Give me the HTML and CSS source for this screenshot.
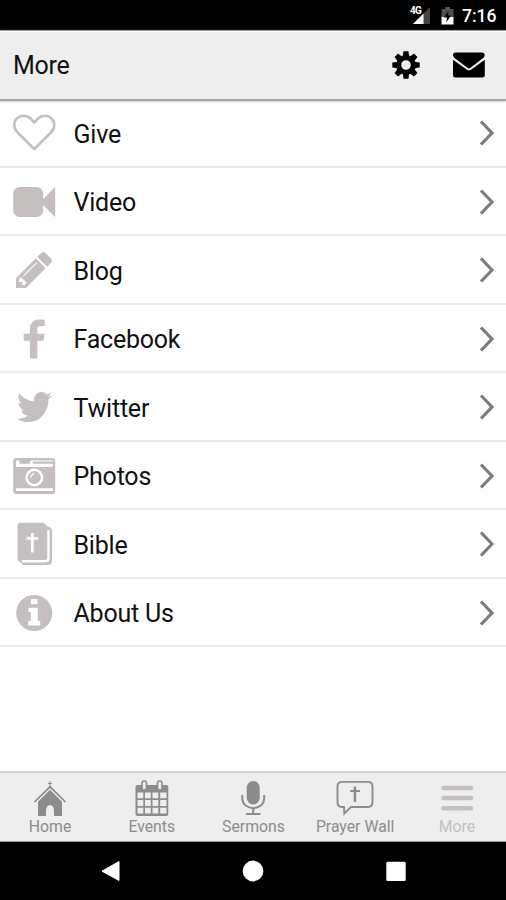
FILE: index.html
```
<!DOCTYPE html>
<html lang="en">
<head>
<meta charset="utf-8">
<title>More</title>
<link rel="stylesheet" href="styles.css">
</head>
<body>
<div class="screen">
  <div class="status">
    <svg class="signal" width="24" height="20" viewBox="0 0 24 20"><path d="M5 18L22 1V18z" fill="#444"/><path d="M5 18L15.500 7.500V18z" fill="#fff"/></svg>
    <span class="net">4G</span>
    <svg class="battery" width="13" height="20" viewBox="0 0 13 20"><path d="M4 1h5v2h3.500v8H.5V3H4z" fill="#505050"/><path d="M.5 11h12v7.500H.5z" fill="#fff"/><path d="M7.500 5L3 11.500h3L5.200 16.500 10 9.500H7z" fill="#000"/></svg>
    <span class="clock">7:16</span>
  </div>
  <header class="header">
    <h1 class="title">More</h1>
    <svg class="gear" width="30" height="30" viewBox="-15 -15 30 30"><circle r="7.400" fill="none" stroke="#000" stroke-width="5.200"/><g fill="#000"><path id="tooth" d="M-3.100-9L-2.500-13.700H2.500L3.100-9z"/><use href="#tooth" transform="rotate(45)"/><use href="#tooth" transform="rotate(90)"/><use href="#tooth" transform="rotate(135)"/><use href="#tooth" transform="rotate(180)"/><use href="#tooth" transform="rotate(225)"/><use href="#tooth" transform="rotate(270)"/><use href="#tooth" transform="rotate(315)"/></g></svg>
    <svg class="mail" width="34" height="28" viewBox="0 0 34 28"><path d="M3.500 1.500h27q2.200 0 2.200 2.500c0 1.500-1 2.700-2.500 3.800L18.500 16.700q-1.500 1-3 0L3.500 7.800C2 6.700 1 5.500 1 4q0-2.500 2.500-2.500z"/><path d="M1 8.800L15 18.800q2 1.300 4 0L32.800 8.800V24q0 2.500-2.500 2.500H3.500Q1 26.500 1 24z"/></svg>
  </header>
  <main class="list">
    <a class="row"><svg class="icon" viewBox="0 0 44 44"><path class="line" d="M22.200 38L5.500 21.500C1 16.500 1.500 10.500 5 7.300C9 3.600 15 4.200 18.500 7.500L22.200 11.500L26 7.500C30 4 35.500 3.800 39.300 7.300C43.300 11 43.200 17 39 21.500z"/></svg><span class="label">Give</span><svg class="chevron" viewBox="0 0 16 28"><path d="M2 2.500L13 14L2 25.500"/></svg></a>
    <a class="row"><svg class="icon" viewBox="0 0 44 44"><rect x="1.200" y="7" width="30" height="30" rx="6.500"/><path d="M31 19L42.500 7.500Q43.200 7 43.200 8V36Q43.200 37 42.500 36.500L31 25z"/></svg><span class="label">Video</span><svg class="chevron" viewBox="0 0 16 28"><path d="M2 2.500L13 14L2 25.500"/></svg></a>
    <a class="row"><svg class="icon" viewBox="0 0 44 44"><path transform="translate(.96 .46) scale(.02376)" d="M491 1536l91-91-235-235-91 91v107h128v128h107zm523-928q0-22-22-22-10 0-17 7l-542 542q-7 7-7 17 0 22 22 22 10 0 17-7l542-542q7-7 7-17zm-54-192l416 416-832 832h-416v-416zm683 96q0 53-37 90l-166 166-416-416 166-165q36-38 90-38 53 0 91 38l235 234q37 39 37 91z"/></svg><span class="label">Blog</span><svg class="chevron" viewBox="0 0 16 28"><path d="M2 2.500L13 14L2 25.500"/></svg></a>
    <a class="row"><svg class="icon" viewBox="0 0 44 44"><path transform="translate(9.400 2.500) scale(.0243 .0234)" d="M959 12v264h-157q-86 0-116 36t-30 108v189h293l-39 296h-254v759h-306v-759h-255v-296h255v-218q0-186 104-288.500t277-102.500q147 0 228 12z"/></svg><span class="label">Facebook</span><svg class="chevron" viewBox="0 0 16 28"><path d="M2 2.500L13 14L2 25.500"/></svg></a>
    <a class="row"><svg class="icon" viewBox="0 0 44 44"><path transform="translate(4.020 1) scale(.0222 .0235)" d="M1620 408q-67 98-162 167 1 14 1 42 0 130-38 259.500t-115.500 248.500-184.500 210.500-258 146-323 54.500q-271 0-496-145 35 4 78 4 225 0 401-138-105-2-188-64.500t-114-159.500q33 5 61 5 43 0 85-11-112-23-185.500-111.500t-73.500-205.500v-4q68 38 146 41-66-44-105-115t-39-154q0-88 44-163 121 149 294.500 238.500t371.500 99.500q-8-38-8-74 0-134 94.500-228.500t228.500-94.500q140 0 236 102 109-21 205-78-37 115-142 178 93-10 186-50z"/></svg><span class="label">Twitter</span><svg class="chevron" viewBox="0 0 16 28"><path d="M2 2.500L13 14L2 25.500"/></svg></a>
    <a class="row"><svg class="icon" viewBox="0 0 44 44"><rect x="1.200" y="4" width="42" height="36" rx="3"/><g fill="#fff"><path d="M4 6.500H7.500V9.700H18V6.500H41V8H22.500L20.500 9.700H41V13H4z"/><path d="M4 34.300H41V37H4z"/><circle cx="22.300" cy="23.500" r="9"/></g><path d="M21 7.500H41V9H20z"/><circle cx="22.300" cy="23.500" r="6.500"/><path d="M18.800 23.500A3.500 3.500 0 0 1 22.300 20" fill="none" stroke="#fff" stroke-width="1.500"/></svg><span class="label">Photos</span><svg class="chevron" viewBox="0 0 16 28"><path d="M2 2.500L13 14L2 25.500"/></svg></a>
    <a class="row"><svg class="icon" viewBox="0 0 44 44"><path d="M9 .8H31.500L35.500 4.500Q40 5 40 9V39Q40 43 36 43H11L5.500 38V4.500Q5.500 .8 9 .8z"/><path d="M36.500 8V36Q36.500 39.300 33 39.300H10" fill="none" stroke="#fff" stroke-width="2.400"/><path d="M19 11H21.700V15H26.200V17.700H21.700V30.500H19V17.700H14.700V15H19z" fill="#fff"/></svg><span class="label">Bible</span><svg class="chevron" viewBox="0 0 16 28"><path d="M2 2.500L13 14L2 25.500"/></svg></a>
    <a class="row"><svg class="icon" viewBox="0 0 44 44"><circle cx="22.200" cy="22" r="18"/><path d="M19 8H25.500V13.200H19zM16.500 16.700H25.800V30H28.200V34.500H16.200V30H18.800V21H16.500z" fill="#fff"/></svg><span class="label">About Us</span><svg class="chevron" viewBox="0 0 16 28"><path d="M2 2.500L13 14L2 25.500"/></svg></a>
  </main>
  <nav class="tabs">
    <a class="tab"><svg class="tabicon" viewBox="0 0 40 40"><path d="M19.500 1h1v2h1.500v1h-1.500v3.500h-1V4H18V3h1.500z"/><path d="M4.500 22L20 6.800L35.500 22" fill="none" stroke="#8c8c8c" stroke-width="1.700"/><path d="M8 21.700L20 9.800L32 21.700V36H24V30Q23.500 25.500 20 25Q16.500 25.500 16 30V36H8z"/></svg><span>Home</span></a>
    <a class="tab"><svg class="tabicon" viewBox="0 0 40 40"><path d="M5.500 5H34.500Q36.300 5 36.300 7V34Q36.300 36 34.500 36H5.500Q3.500 36 3.500 34V7Q3.500 5 5.500 5z"/><g fill="#eee"><path id="week" d="M5.500 12.500h5.800v5.800H5.500zM13 12.500h5.800v5.800H13zM20.500 12.500h5.800v5.800H20.500zM28.200 12.500h6.300v5.800H28.200z"/><use href="#week" y="7.600"/><use href="#week" y="15.200"/></g><g fill="#eee" stroke="#8c8c8c" stroke-width="1.600"><rect x="10" y="1" width="4.500" height="9" rx="2"/><rect x="25.500" y="1" width="4.500" height="9" rx="2"/></g></svg><span>Events</span></a>
    <a class="tab"><svg class="tabicon" viewBox="0 0 40 40"><rect x="13.700" y="1" width="13" height="23.500" rx="6.500"/><path d="M9.300 15V18C9.300 31.500 31.200 31.500 31.200 18V15M20.200 28V33.500M13 34H27.500" fill="none" stroke="#8c8c8c" stroke-width="2"/></svg><span>Sermons</span></a>
    <a class="tab"><svg class="tabicon" viewBox="0 0 40 40"><path d="M7 1.900H33Q37.500 1.900 37.500 6.500V22Q37.500 27 33 27H16L9.300 33.500L9 27H7Q2.500 27 2.500 22V6.500Q2.500 1.900 7 1.900z" fill="none" stroke="#8c8c8c" stroke-width="1.900"/><path d="M18.700 6.500H21.200V10H25V12H21.200V22H18.700V12H15.200V10H18.700z"/></svg><span>Prayer Wall</span></a>
    <a class="tab active"><svg class="tabicon" viewBox="0 0 40 40"><path d="M6.500 8H34M6.500 18H34M6.500 28.300H34" stroke="#c5bfbf" stroke-width="4.500" stroke-linecap="round"/></svg><span>More</span></a>
  </nav>
  <div class="android">
    <svg viewBox="0 0 22 22"><path d="M19 1.500V20.500L2 11.200z" fill="#fff" stroke="#fff" stroke-linejoin="round"/></svg>
    <svg viewBox="0 0 22 22"><circle cx="11" cy="11" r="10.400" fill="#fff"/></svg>
    <svg viewBox="0 0 22 22"><rect x="1.300" y="1.800" width="19.400" height="19.200" rx="1.500" fill="#fff"/></svg>
  </div>
</div>
</body>
</html>
```
FILE: styles.css
```
* { box-sizing: border-box; }
body { margin: 0; background: #fff; font-family: Roboto, "Liberation Sans", sans-serif; }
.screen { width: 506px; height: 900px; display: flex; flex-direction: column; overflow: hidden; background: #fff; }
.status { position: relative; height: 30px; flex: none; background: #000; color: #fff; display: flex; align-items: center; justify-content: flex-end; padding: 2px 9px 0 0; }
.signal { margin-right: 9px; }
.net { position: absolute; left: 410px; top: 4px; font-size: 10px; line-height: 13px; font-weight: 700; letter-spacing: -0.8px; }
.battery { margin-right: 8px; }
.clock { font-size: 17.500px; font-weight: 500; line-height: 22px; width: 35px; white-space: nowrap; }
.header { position: relative; z-index: 1; flex: none; height: 71px; background: #eee; border-bottom: 2px solid #a5a7a6; border-top: 1px solid #999; box-shadow: 0 1px 2px #ccc, inset 0 1px #fff; display: flex; align-items: center; padding: 0 20.500px 0 13px; }
.title { margin: 2px auto 0 0; font-size: 25px; letter-spacing: -0.25px; font-weight: 400; line-height: 32px; color: #111; }
.gear { margin-right: 31px; }
.mail { margin-top: -1px; }
.list { flex: 1; margin-top: -2px; }
.row { display: flex; height: 68.5px; border-bottom: 2px solid #ebebeb; padding: 12px 11px 0 12px; }
.icon { width: 44px; height: 44px; fill: #c5bfbf; flex: none; }
.line { fill: none; stroke: #c5bfbf; stroke-width: 2.6; stroke-linejoin: round; }
.label { flex: 1; margin-left: 17.500px; padding-top: 1.8px; line-height: 44px; font-size: 25px; letter-spacing: -0.22px; color: #111; }
.chevron { width: 16px; height: 28px; margin-top: 8px; fill: none; stroke: #7c7c7c; stroke-width: 3.2; }
.tabs { flex: none; height: 71px; background: #eee; border-top: 2px solid #d6d6d6; border-bottom: 1px solid #999; display: flex; }
.tab { width: 101.700px; flex: none; display: flex; flex-direction: column; align-items: center; padding: 7px 1.500px 0 0; color: #8c8c8c; font-size: 15.800px; line-height: 18px; }
.tabicon { width: 40px; height: 40px; fill: #8c8c8c; margin-bottom: -2px; }
.active { color: #c5bfbf; }
.android { flex: none; height: 58px; background: #000; display: flex; justify-content: center; align-items: center; gap: 120.500px; }
.android svg { width: 22px; height: 22px; }
```
